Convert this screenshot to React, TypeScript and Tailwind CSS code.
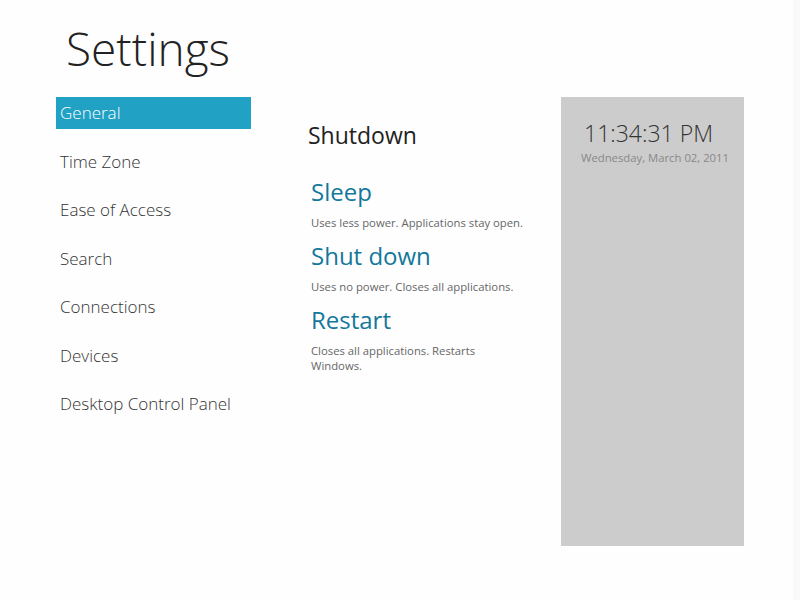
import React from 'react';

const navItems = [
  'General',
  'Time Zone',
  'Ease of Access',
  'Search',
  'Connections',
  'Devices',
  'Desktop Control Panel',
];

const actions = [
  { title: 'Sleep', desc: ['Uses less power. Applications stay open.'] },
  { title: 'Shut down', desc: ['Uses no power. Closes all applications.'] },
  { title: 'Restart', desc: ['Closes all applications. Restarts', 'Windows.'] },
];

const App: React.FC = () => {
  const selected = 'General';

  return (
    <div
      className="w-[800px] h-[600px] bg-[#fefefe] flex overflow-hidden"
      style={{ fontFamily: '"Open Sans", "Noto Sans", sans-serif' }}
    >
      <div className="flex-1 flex flex-col">
        {/* Title */}
        <h1 className="pl-[66px] pt-[17px] h-[97px] text-[46px] leading-[62px] font-light text-[#222]">
          Settings
        </h1>

        <div className="flex">
          {/* Left nav */}
          <ul className="ml-[56px] w-[195px] shrink-0 flex flex-col gap-[16.5px]">
            {navItems.map((item) => (
              <li
                key={item}
                className={`h-[32px] pl-[4px] flex items-center text-[17px] font-light ${
                  item === selected ? 'bg-[#21a1c4] text-white' : 'text-[#333]'
                }`}
              >
                {item}
              </li>
            ))}
          </ul>

          {/* Shutdown options */}
          <div className="ml-[57px] w-[230px] shrink-0 pt-[24px]">
            <h2 className="text-[23px] leading-[28px] text-[#222]">Shutdown</h2>
            <div className="mt-[27px] pl-[3px]">
              {actions.map((a, i) => (
                <div key={a.title} className={i > 0 ? 'mt-[10px]' : ''}>
                  <div className="text-[24px] leading-[32px] text-[#13789a]">{a.title}</div>
                  <p className="mt-[7px] text-[11.3px] leading-[15px] text-[#666] whitespace-nowrap">
                    {a.desc.map((line, j) => (
                      <span key={j} className="block">
                        {line}
                      </span>
                    ))}
                  </p>
                </div>
              ))}
            </div>
          </div>

          {/* Clock panel */}
          <div className="ml-[23px] w-[183px] h-[449px] shrink-0 bg-[#cccccc] pt-[22px] pl-[20px]">
            <div className="ml-[3px] text-[23px] leading-[28px] font-light text-[#333]">
              11:34:31 PM
            </div>
            <div className="mt-[3px] text-[11.3px] leading-[15px] text-[#888]">
              Wednesday, March 02, 2011
            </div>
          </div>
        </div>
      </div>
      <div className="w-[7px] h-full bg-[#f9f9f9]" />
    </div>
  );
};

export default App;
